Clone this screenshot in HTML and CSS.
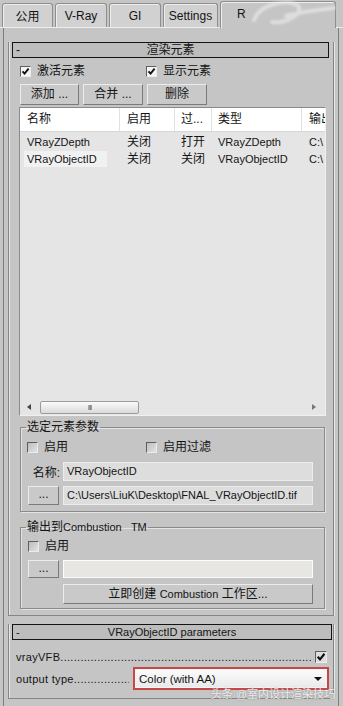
FILE: index.html
```html
<!DOCTYPE html>
<html lang="zh">

<head>
    <meta charset="UTF-8">
    <meta name="viewport" content="width=device-width, initial-scale=1.0">
    <title>渲染元素</title>
    <link rel="stylesheet" href="styles.css">
</head>

<body>
    <!-- Вкладки -->
    <div class="tabs">
        <div class="tab">公用</div>
        <div class="tab lat">V-Ray</div>
        <div class="tab lat">GI</div>
        <div class="tab lat">Settings</div>
        <div class="tab active lat">R</div>
    </div>

    <div class="main">
        <!-- Rollout: 渲染元素 -->
        <div class="rollout">
            <div class="rollout-head"><span class="minus">-</span><span class="title">渲染元素</span><span></span></div>
            <div class="rollout-body">
                <div class="check-row">
                    <label class="check wide"><span class="cb on"><svg viewBox="0 0 9 9"><polyline points="1.5,4.3 3.6,6.6 7.6,1.6" /></svg></span>激活元素</label>
                    <label class="check"><span class="cb on"><svg viewBox="0 0 9 9"><polyline points="1.5,4.3 3.6,6.6 7.6,1.6" /></svg></span>显示元素</label>
                </div>

                <div class="btn-row">
                    <span class="btn">添加 ...</span>
                    <span class="btn">合并 ...</span>
                    <span class="btn">删除</span>
                </div>

                <div class="list">
                    <div class="list-head cols">
                        <span>名称</span>
                        <span>启用</span>
                        <span>过...</span>
                        <span>类型</span>
                        <span>输出</span>
                    </div>
                    <div class="list-rows">
                        <div class="row cols">
                            <span class="lat">VRayZDepth</span>
                            <span>关闭</span>
                            <span>打开</span>
                            <span class="lat">VRayZDepth</span>
                            <span class="lat">C:\</span>
                        </div>
                        <div class="row cols">
                            <span class="lat"><em class="sel">VRayObjectID</em></span>
                            <span>关闭</span>
                            <span>关闭</span>
                            <span class="lat">VRayObjectID</span>
                            <span class="lat">C:\</span>
                        </div>
                    </div>
                    <div class="hscroll">
                        <span class="arrow-left"></span>
                        <span class="thumb">III</span>
                        <span class="arrow-right"></span>
                    </div>
                </div>

                <!-- 选定元素参数 -->
                <fieldset class="group first">
                    <legend>选定元素参数</legend>
                    <div class="check-row">
                        <label class="check wide-g"><span class="cb"></span>启用</label>
                        <label class="check"><span class="cb"></span>启用过滤</label>
                    </div>
                    <div class="field-row name-row">
                        <span class="field-label">名称:</span>
                        <span class="field lat">VRayObjectID</span>
                    </div>
                    <div class="field-row path-row">
                        <span class="btn small">...</span>
                        <span class="field lat">C:\Users\LiuK\Desktop\FNAL_VRayObjectID.tif</span>
                    </div>
                </fieldset>

                <!-- Combustion -->
                <fieldset class="group second">
                    <legend>输出到<span class="lat">Combustion&nbsp;&nbsp;&nbsp;TM</span></legend>
                    <div class="check-row">
                        <label class="check"><span class="cb"></span>启用</label>
                    </div>
                    <div class="field-row path-row comb">
                        <span class="btn small">...</span>
                        <span class="field empty"></span>
                    </div>
                    <div class="btn wide-btn">立即创建 <span class="lat">Combustion</span> 工作区...</div>
                </fieldset>
            </div>
        </div>

        <!-- Rollout: VRayObjectID parameters -->
        <div class="rollout params lat">
            <div class="rollout-head"><span class="minus">-</span><span class="title">VRayObjectID parameters</span><span></span></div>
            <div class="rollout-body">
                <div class="param-row">
                    <span class="leader">vrayVFB.........................................................................................</span>
                    <span class="cb on big"><svg viewBox="0 0 9 9"><polyline points="1.5,4.3 3.6,6.6 7.6,1.6" /></svg></span>
                </div>
                <div class="param-row">
                    <span class="leader fixed">output type..............................</span>
                    <div class="dropdown">
                        <span>Color (with AA)</span>
                        <span class="arrow-down"></span>
                    </div>
                </div>
            </div>
        </div>
    </div>

    <!-- водяні знаки -->
    <svg class="logo-mark" viewBox="0 0 90 30">
        <path d="M6 20 C 12 4, 40 -2, 50 6 C 56 12, 40 24, 24 22 M38 16 C 52 12, 70 10, 86 8" />
    </svg>
    <div class="mark">头条 @室内设计渲染技巧</div>
</body>

</html>
```

FILE: styles.css
```css
body {
    margin: 0;
    width: 343px;
    height: 706px;
    overflow: hidden;
    position: relative;
    background-color: #c5c5c5;
    font-family: "Liberation Sans", "Noto Sans CJK SC", sans-serif;
    font-size: 12px;
    color: #141414;
}

/* Латинський текст трохи вужчий, як Tahoma */
.lat {
    font-size: 11px;
}

/* Вкладки */
.tabs {
    display: flex;
    align-items: flex-end;
    gap: 2px;
    height: 28px;
    padding-left: 2px;
    box-sizing: border-box;
    border-bottom: 1px solid #ededed;
}

.tab {
    box-sizing: border-box;
    width: 51px;
    height: 24px;
    border: 1px solid #8e8e8e;
    border-bottom: none;
    border-radius: 3px 3px 0 0;
    background-color: #d1d1d1;
    box-shadow: inset 1px 1px 0 #ededed;
    display: flex;
    align-items: center;
    justify-content: center;
}

.tab.lat {
    font-size: 12px;
}

.tab:nth-child(2),
.tab:nth-child(3) {
    width: 52px;
}

.tab:nth-child(4) {
    width: 55px;
}

.tab.active {
    width: 116px;
    height: 27px;
    margin-bottom: -1px;
    background-color: #c5c5c5;
    justify-content: flex-start;
    padding: 0 0 2px 16px;
}

.main {
    box-sizing: border-box;
    margin-left: 3px;
    width: 336px;
    height: 678px;
    border-left: 1px solid #7e7e7e;
    border-right: 1px solid #7e7e7e;
    padding: 14px 4px 0 4px;
}

/* Rollout */
.rollout {
    border: 1px solid #858585;
    border-top: none;
    padding: 0 4px 6px 3px;
    box-shadow: 1px 0 0 #e6e6e6, inset 1px 0 0 #e6e6e6;
}

.rollout-head {
    box-sizing: border-box;
    height: 16px;
    border: 1px solid #141414;
    background-color: #bdbdbd;
    display: grid;
    grid-template-columns: 1fr auto 1fr;
    align-items: center;
    line-height: 14px;
}

.rollout-head .minus {
    padding-left: 3px;
}

.rollout-body {
    padding: 0 3px 0 7px;
}

/* Чекбокси */
.check-row {
    display: flex;
    margin-top: 6px;
    height: 14px;
    padding-left: 1px;
}

.check {
    display: flex;
    align-items: center;
    gap: 6px;
    line-height: 14px;
}

.check.wide {
    width: 126px;
}

.check.wide-g {
    width: 119px;
}

.cb {
    box-sizing: border-box;
    width: 11px;
    height: 11px;
    border: 1px solid;
    border-color: #5f5f5f #ececec #ececec #5f5f5f;
    background: linear-gradient(135deg, #bdbdbd, #e2e2e2);
    flex-shrink: 0;
}

.cb.on {
    background: #f4f4f4;
}

.cb svg {
    display: block;
    width: 9px;
    height: 9px;
}

.cb polyline {
    fill: none;
    stroke: #111;
    stroke-width: 1.9;
}

.cb.big {
    width: 12px;
    height: 12px;
    background: #dedede;
}

.cb.big svg {
    width: 10px;
    height: 10px;
}

/* Кнопки */
.btn-row {
    display: flex;
    gap: 4px;
    margin-top: 6px;
    padding-left: 1px;
}

.btn {
    box-sizing: border-box;
    width: 59px;
    height: 21px;
    border: 1px solid;
    border-color: #ececec #7a7a7a #7a7a7a #ececec;
    background-color: #c9c9c9;
    text-align: center;
    line-height: 19px;
}

.btn-row .btn:nth-child(n+2) {
    width: 60px;
}

.btn.small {
    width: 31px;
    height: 19px;
    line-height: 15px;
}

/* Список */
.list {
    box-sizing: border-box;
    height: 309px;
    margin-top: 2px;
    border: 1px solid;
    border-color: #8a8a8a #f0f0f0 #f0f0f0 #8a8a8a;
    background-color: #e5e5e5;
    display: flex;
    flex-direction: column;
}

.cols {
    display: grid;
    grid-template-columns: 100px 55px 37px 90px 1fr;
    white-space: nowrap;
}

.cols span {
    overflow: hidden;
    padding-left: 6px;
}

.cols span:first-child,
.cols span:nth-child(2),
.cols span:last-child {
    padding-left: 7px;
}

.list-head {
    height: 23px;
    line-height: 23px;
    background-color: #ffffff;
    border-bottom: 1px solid #d6d6d6;
}

.list-head span:not(:last-child) {
    border-right: 1px solid #e2e2e2;
}

.list-rows {
    flex: 1;
    padding-top: 2px;
}

.row {
    height: 17px;
    line-height: 17px;
}

.sel {
    font-style: normal;
    background-color: #f1f1f1;
    margin-left: -3px;
    padding: 2px 10px 2px 3px;
}

.hscroll {
    height: 16px;
    display: flex;
    align-items: center;
}

.arrow-left {
    margin-left: 7px;
    border-right: 4px solid #444;
    border-top: 3px solid transparent;
    border-bottom: 3px solid transparent;
}

.arrow-right {
    margin-left: auto;
    margin-right: 9px;
    border-left: 4px solid #777;
    border-top: 3px solid transparent;
    border-bottom: 3px solid transparent;
}

.thumb {
    box-sizing: border-box;
    width: 99px;
    height: 13px;
    margin-left: 9px;
    border: 1px solid #9c9c9c;
    border-radius: 2px;
    background: linear-gradient(#fbfbfb, #dadada);
    text-align: center;
    font-size: 8px;
    line-height: 11px;
    color: #555;
    letter-spacing: -1px;
}

/* Групи */
.group {
    margin: 3px 1px 0 1px;
    padding: 0 5px 6px 6px;
    min-width: 0;
    border: 1px solid #8a8a8a;
    box-shadow: inset 1px 1px 0 #e3e3e3, 1px 1px 0 #e3e3e3;
}

.group legend {
    padding: 0 1px;
    margin-left: -1px;
    line-height: 16px;
}

.group.first .check-row {
    margin-top: 5px;
    padding-left: 0;
}

.group.second {
    margin-top: 7px;
    padding-bottom: 4px;
}

.group.second .check-row {
    margin-top: 4px;
}

.field-row {
    display: flex;
    align-items: center;
    gap: 4px;
    padding-left: 1px;
}

.name-row {
    margin-top: 8px;
    gap: 3px;
    padding-left: 0;
}

.field-label {
    width: 33px;
    text-align: right;
}

.field {
    box-sizing: border-box;
    width: 250px;
    height: 19px;
    line-height: 17px;
    padding-left: 3px;
    background-color: #dddddd;
    border: 1px solid #ececec;
    white-space: nowrap;
    overflow: hidden;
}

.path-row {
    margin-top: 5px;
}

.comb {
    margin-top: 7px;
}

.comb .btn.small,
.comb .field {
    height: 18px;
}

.field.empty {
    background-color: #e8e6e3;
    border-color: #fbfbfb;
}

.wide-btn {
    width: 250px;
    height: 20px;
    margin: 6px 0 0 36px;
    line-height: 18px;
}

/* Параметри */
.params {
    margin-top: 8px;
    padding-right: 1px;
    padding-bottom: 8px;
}

.params .rollout-body {
    padding: 0 5px 0 4px;
}

.param-row {
    display: flex;
    align-items: center;
    gap: 4px;
}

.param-row:first-child {
    margin-top: 10px;
    height: 14px;
}

.param-row:last-child {
    margin-top: 3px;
}

.leader {
    flex: 1;
    overflow: hidden;
    white-space: nowrap;
    letter-spacing: 0.3px;
}

.leader.fixed {
    flex: none;
    width: 113px;
}

.dropdown {
    box-sizing: border-box;
    flex: 1;
    height: 23px;
    margin-right: -2px;
    border: 2px solid #c94646;
    box-shadow: inset 0 0 0 1px #f6f6f6;
    background: linear-gradient(#fcfcfc, #e9e9e9);
    display: flex;
    align-items: center;
    padding: 0 5px 0 4px;
    font-size: 11.5px;
}

.arrow-down {
    margin-left: auto;
    border-top: 4px solid #111;
    border-left: 4px solid transparent;
    border-right: 4px solid transparent;
}

/* Водяні знаки */
.logo-mark {
    position: absolute;
    top: 0;
    left: 248px;
    width: 90px;
    height: 30px;
    opacity: 0.55;
    filter: blur(0.8px);
}

.logo-mark path {
    fill: none;
    stroke: #f2f2f2;
    stroke-width: 4;
    stroke-linecap: round;
}

.mark {
    position: absolute;
    right: 8px;
    bottom: 5px;
    font-size: 11px;
    color: rgba(255, 255, 255, 0.8);
    text-shadow: 0 0 2px #8a8a8a;
}
```
